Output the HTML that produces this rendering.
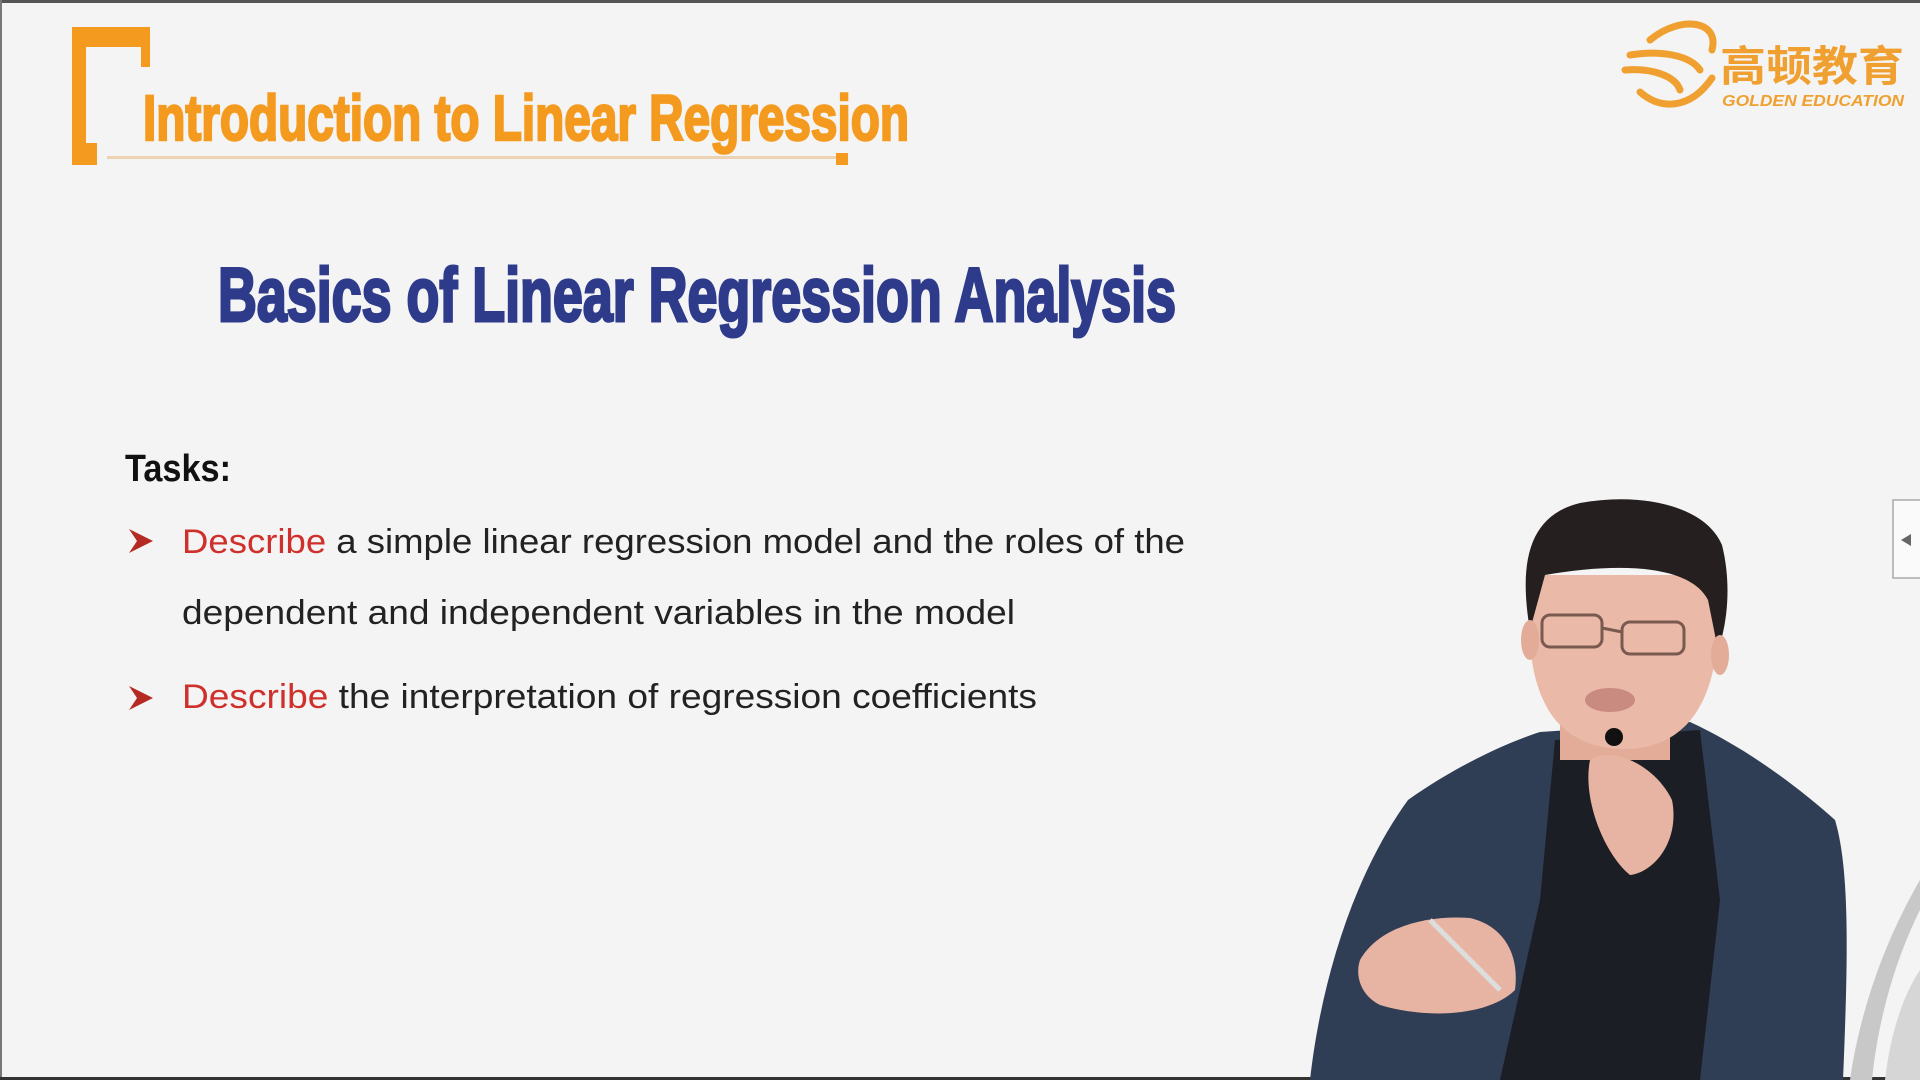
<!DOCTYPE html>
<html><head><meta charset="utf-8"><style>
html,body{margin:0;padding:0;width:1920px;height:1080px;overflow:hidden;background:#f4f4f4}
svg{display:block}
</style></head><body>
<svg width="1920" height="1080" viewBox="0 0 1920 1080" xmlns="http://www.w3.org/2000/svg">
<rect width="1920" height="1080" fill="#f4f4f4"/>
<rect x="0" y="0" width="1920" height="3" fill="#555"/>
<rect x="0" y="0" width="2" height="1080" fill="#777"/>
<rect x="0" y="1077" width="1920" height="3" fill="#333"/>
<!-- bracket -->
<path d="M72 27 H150 V67 H141 V47 H86 V143 H97 V165 H72 Z" fill="#f39a1f"/>
<rect x="107" y="156" width="732" height="3" fill="#ecd3b4"/>
<rect x="836" y="153" width="12" height="12" fill="#f39a1f"/>
<text x="143" y="140" textLength="766" lengthAdjust="spacingAndGlyphs" font-family="Liberation Sans, sans-serif" font-weight="bold" font-size="64" fill="#f39a1f" stroke="#f39a1f" stroke-width="2.5">Introduction to Linear Regression</text>
<text x="218" y="321" textLength="958" lengthAdjust="spacingAndGlyphs" font-family="Liberation Sans, sans-serif" font-weight="bold" font-size="76" fill="#2e3a8a" stroke="#2e3a8a" stroke-width="3">Basics of Linear Regression Analysis</text>
<text x="125" y="481" textLength="106" lengthAdjust="spacingAndGlyphs" font-family="Liberation Sans, sans-serif" font-weight="bold" font-size="38" fill="#111">Tasks:</text>
<g font-family="Liberation Sans, sans-serif" font-size="34" fill="#222">
<text x="182" y="553" textLength="1003" lengthAdjust="spacingAndGlyphs"><tspan fill="#d0302c">Describe</tspan> a simple linear regression model and the roles of the</text>
<text x="182" y="624" textLength="833" lengthAdjust="spacingAndGlyphs">dependent and independent variables in the model</text>
<text x="182" y="708" textLength="855" lengthAdjust="spacingAndGlyphs"><tspan fill="#d0302c">Describe</tspan> the interpretation of regression coefficients</text>
</g>
<g fill="#b52a22">
<path d="M129 529 L153 541 L129 553 L137 541 Z"/>
<path d="M129 686 L153 698 L129 710 L137 698 Z"/>
</g>
<!-- logo -->
<g fill="none" stroke="#f0a030" stroke-width="7" stroke-linecap="round">
<path d="M1650 40 C1680 15 1720 20 1712 50"/>
<path d="M1630 55 C1660 50 1690 55 1700 70"/>
<path d="M1625 70 C1650 68 1675 75 1680 90"/>
<path d="M1640 92 C1660 110 1690 110 1712 78"/>
</g>
<text x="1720" y="81" textLength="184" lengthAdjust="spacingAndGlyphs" font-family="Liberation Sans, Noto Sans CJK SC, sans-serif" font-weight="bold" font-size="42" fill="#f0a030">高顿教育</text>
<text x="1722" y="106" textLength="182" lengthAdjust="spacingAndGlyphs" font-family="Liberation Sans, sans-serif" font-weight="bold" font-style="italic" font-size="16" fill="#f0a030">GOLDEN EDUCATION</text>
<!-- right tab -->
<rect x="1893" y="500" width="30" height="78" fill="#fafafa" stroke="#aaa" stroke-width="1.5"/>
<path d="M1901 540 L1911 534 V546 Z" fill="#666"/>
<!-- gray swoosh -->
<path d="M1850 1080 C1860 1010 1885 940 1920 880 V910 C1895 960 1878 1020 1872 1080 Z" fill="#c8c8c8"/>
<path d="M1885 1080 C1890 1035 1903 995 1920 970 V1080 Z" fill="#d6d6d6"/>
<!-- person -->
<path d="M1310 1080 C1320 990 1350 880 1408 800 C1450 770 1500 745 1540 732 L1690 722 C1740 745 1790 780 1835 820 C1850 870 1848 960 1843 1080 Z" fill="#2f3e55"/>
<path d="M1555 740 L1700 730 L1720 900 L1700 1080 L1500 1080 L1540 900 Z" fill="#1b1e24"/>
<rect x="1560" y="700" width="110" height="60" fill="#e2ac98"/>
<path d="M1532 600 C1525 650 1535 700 1560 725 C1580 745 1610 752 1640 748 C1690 740 1712 700 1718 640 C1725 610 1725 590 1720 575 L1530 575 Z" fill="#eab9a8"/>
<path d="M1530 630 C1518 560 1530 515 1580 503 C1640 492 1705 505 1722 545 C1732 585 1727 625 1718 650 L1708 600 C1690 565 1620 562 1545 575 Z" fill="#25201f"/>
<ellipse cx="1530" cy="640" rx="9" ry="20" fill="#e2ac98"/>
<ellipse cx="1720" cy="655" rx="9" ry="20" fill="#e2ac98"/>
<g fill="none" stroke="#7a5a50" stroke-width="3">
<rect x="1542" y="615" width="60" height="32" rx="8"/>
<rect x="1622" y="622" width="62" height="32" rx="8"/>
<path d="M1602 628 L1622 632"/>
</g>
<ellipse cx="1610" cy="700" rx="25" ry="12" fill="#c98a80"/>
<circle cx="1614" cy="737" r="9" fill="#111"/>
<path d="M1590 760 C1612 745 1655 765 1672 800 C1680 840 1655 872 1630 875 C1605 855 1582 800 1590 760 Z" fill="#e7b3a2"/>
<path d="M1360 960 C1380 925 1430 915 1470 918 C1500 925 1520 950 1515 990 C1490 1015 1430 1020 1380 1005 C1360 995 1355 975 1360 960 Z" fill="#e7b3a2"/>
<path d="M1430 920 L1500 990" stroke="#ddd" stroke-width="5"/>
</svg>
</body></html>
